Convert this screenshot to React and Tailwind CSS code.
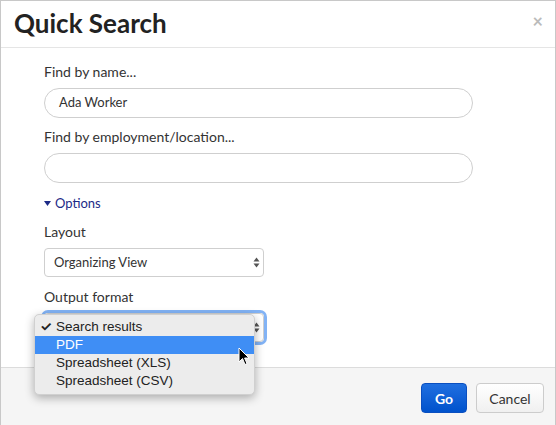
import React from "react";

function Chevrons() {
  return (
    <svg width="7" height="11" viewBox="0 0 7 11" className="text-[#555]">
      <path d="M3.5 0.5 L6.5 4.5 H0.5 Z" fill="currentColor" />
      <path d="M3.5 10.5 L6.5 6.5 H0.5 Z" fill="currentColor" />
    </svg>
  );
}

export default function App() {
  return (
    <div className="w-[556px] h-[425px] bg-white border-l border-t border-r border-[#c8c8c8] flex flex-col overflow-hidden relative font-['Lato','Noto_Sans',sans-serif]">
      {/* Header */}
      <div className="h-[47px] shrink-0 border-b border-[#e5e5e5] flex items-center justify-between pl-[13px] pr-[12px]">
        <div className="text-[26px] font-bold text-[#222] tracking-[0px] leading-none pb-[2px]">Quick Search</div>
        <div className="text-[#bbb] text-[18px] font-bold leading-none pb-[6px]">×</div>
      </div>

      {/* Body */}
      <div className="flex-1 pl-[43px] pt-[15px] text-[#333] text-[14px]">
        <div className="leading-[18px]">Find by name...</div>
        <div className="mt-[7px] w-[429px] h-[30px] rounded-full border border-[#cfcfcf] flex items-center pl-[14px] text-[13px] text-[#333]">
          Ada Worker
        </div>
        <div className="mt-[10px] leading-[18px]">Find by employment/location...</div>
        <div className="mt-[7px] w-[429px] h-[30px] rounded-full border border-[#cfcfcf]" />
        <div className="mt-[11px] flex items-center gap-[4px] text-[#1c2a87] text-[13px] leading-[18px]">
          <svg width="7" height="5" viewBox="0 0 7 5"><path d="M0 0 H7 L3.5 5 Z" fill="currentColor" /></svg>
          <span>Options</span>
        </div>
        <div className="mt-[11px] leading-[18px]">Layout</div>
        <div className="mt-[7px] w-[220px] h-[29px] rounded-[4px] border border-[#cfcfcf] flex items-center justify-between pl-[9px] pr-[3px] text-[13px]">
          <span>Organizing View</span>
          <Chevrons />
        </div>
        <div className="mt-[11px] leading-[18px]">Output format</div>
        <div className="mt-[7px] w-[220px] h-[29px] rounded-[4px] border border-[#cfcfcf] ring-[3px] ring-[#82b3f5] flex items-center justify-end pr-[3px]">
          <Chevrons />
        </div>
      </div>

      {/* Footer */}
      <div className="h-[58px] shrink-0 border-t border-[#dcdcdc] bg-[#f5f5f5] flex items-start justify-end gap-[9px] pt-[15px] pr-[11px]">
        <button className="w-[46px] h-[30px] rounded-[4px] bg-gradient-to-b from-[#1f6fe0] to-[#0052cc] border border-[#0a4fc0] text-white text-[14px] font-bold">
          Go
        </button>
        <button className="w-[68px] h-[30px] rounded-[4px] bg-gradient-to-b from-white to-[#f0f0f0] border border-[#cccccc] text-[#333] text-[14px]">
          Cancel
        </button>
      </div>

      {/* Dropdown menu */}
      <div className="absolute left-[33px] top-[313px] w-[221px] h-[81px] rounded-[5px] bg-[#ececec] shadow-[0_3px_10px_rgba(0,0,0,0.3)] border border-[#d0d0d0] pt-[3px] font-['Liberation_Sans','Inter',sans-serif] text-[13.5px] text-[#222]">
        <div className="h-[18px] flex items-center pl-[5px]">
          <span className="w-[16px] font-bold">✓</span>
          <span>Search results</span>
        </div>
        <div className="h-[18px] flex items-center pl-[21px] bg-[#3f8ef5] text-white">PDF</div>
        <div className="h-[18px] flex items-center pl-[21px]">Spreadsheet (XLS)</div>
        <div className="h-[18px] flex items-center pl-[21px]">Spreadsheet (CSV)</div>
      </div>

      {/* Cursor */}
      <svg className="absolute left-[237px] top-[346px]" width="12" height="19" viewBox="0 0 12 19">
        <path d="M1 1 L1 15 L4.5 11.5 L7 17.5 L9 16.6 L6.6 11 L11 11 Z" fill="#000" stroke="#fff" strokeWidth="1" />
      </svg>
    </div>
  );
}
